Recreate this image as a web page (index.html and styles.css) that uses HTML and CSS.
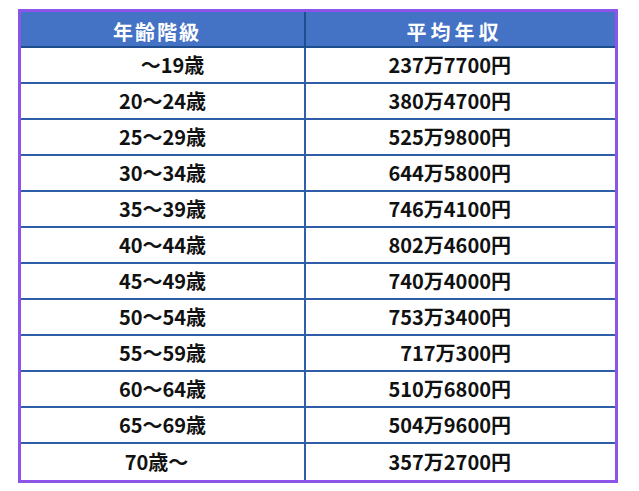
FILE: index.html
```html
<!DOCTYPE html>
<html lang="ja">
<head>
<meta charset="utf-8">
<title>年齢階級別 平均年収</title>
<link rel="stylesheet" href="styles.css">
</head>
<body>
<div class="table">
  <div class="row head">
    <div class="cell c1"><span class="h1">年齢階級</span></div>
    <div class="cell c2"><span class="h2">平均年収</span></div>
  </div>
  <div class="row"><div class="cell c1">　〜19歳</div><div class="cell c2">237万7700円</div></div>
  <div class="row"><div class="cell c1">20〜24歳</div><div class="cell c2">380万4700円</div></div>
  <div class="row"><div class="cell c1">25〜29歳</div><div class="cell c2">525万9800円</div></div>
  <div class="row"><div class="cell c1">30〜34歳</div><div class="cell c2">644万5800円</div></div>
  <div class="row"><div class="cell c1">35〜39歳</div><div class="cell c2">746万4100円</div></div>
  <div class="row"><div class="cell c1">40〜44歳</div><div class="cell c2">802万4600円</div></div>
  <div class="row"><div class="cell c1">45〜49歳</div><div class="cell c2">740万4000円</div></div>
  <div class="row"><div class="cell c1">50〜54歳</div><div class="cell c2">753万3400円</div></div>
  <div class="row"><div class="cell c1">55〜59歳</div><div class="cell c2">717万300円</div></div>
  <div class="row"><div class="cell c1">60〜64歳</div><div class="cell c2">510万6800円</div></div>
  <div class="row"><div class="cell c1">65〜69歳</div><div class="cell c2">504万9600円</div></div>
  <div class="row last"><div class="cell c1 shift">70歳〜</div><div class="cell c2">357万2700円</div></div>
</div>
</body>
</html>
```

FILE: styles.css
```css
html, body {
  margin: 0;
  padding: 0;
  background: #ffffff;
}

body {
  font-family: "Noto Sans CJK JP", "Noto Sans", sans-serif;
  font-weight: 700;
  font-size: 20px;
  color: #111111;
}

.table {
  box-sizing: border-box;
  width: 600px;
  margin: 9px 0 0 18px;
  border: 3px solid #8c55e8;
}

.row {
  box-sizing: border-box;
  display: grid;
  grid-template-columns: 285px 1fr;
  height: 36px;
  border-bottom: 2px solid #2f5ea8;
}

.row.last {
  border-bottom: none;
}

.cell {
  display: flex;
  align-items: center;
  line-height: 1;
  white-space: pre;
}

.c1 {
  justify-content: center;
  border-right: 2px solid #2f5ea8;
}

.c2 {
  justify-content: flex-end;
  padding-right: 104px;
}

.shift {
  padding-right: 12px;
}

.head {
  background: #4472c4;
  border-bottom: 2px solid #1f4e8f;
  color: #ffffff;
}

.head .cell {
  padding-top: 5px;
  box-sizing: border-box;
}

.head .c1 {
  border-right-color: #1f4e8f;
  padding-right: 11px;
}

.head .c2 {
  justify-content: center;
  padding-right: 12px;
}

.h1 {
  letter-spacing: 2px;
}

.h2 {
  letter-spacing: 4px;
}
```
